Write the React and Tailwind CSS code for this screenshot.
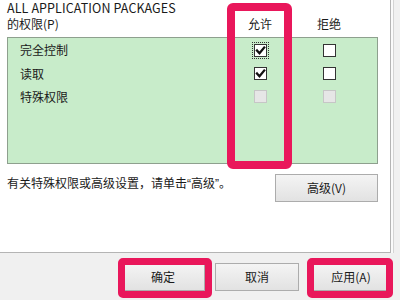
import React from "react";

function Check() {
  return (
    <svg width="11" height="11" viewBox="0 0 11 11" className="block">
      <path d="M2 5.5 L4.5 8.2 L9.2 2.5" fill="none" stroke="#111" strokeWidth="2.3" strokeLinecap="square" />
    </svg>
  );
}

function Box({ checked, disabled, focus }) {
  const box = disabled ? (
    <div className="w-[13px] h-[13px] border border-[#c6c6c6] bg-[#e6e6e6]" />
  ) : (
    <div className="w-[13px] h-[13px] border border-[#333] bg-white flex items-center justify-center">
      {checked && <Check />}
    </div>
  );
  if (focus) {
    return <div className="p-[1px] border border-dotted border-[#333]">{box}</div>;
  }
  return box;
}

function Row({ label, h, a, b, focus, disabled }) {
  return (
    <div className={`flex items-center ${h}`}>
      <div className="w-[227px] pl-[12px] leading-[16px]">{label}</div>
      <div className="w-[50px] flex justify-center">
        <Box checked={a} disabled={disabled} focus={focus} />
      </div>
      <div className="w-[50px] ml-[19px] flex justify-center">
        <Box checked={b} disabled={disabled} />
      </div>
    </div>
  );
}

function Btn({ children, className = "" }) {
  return (
    <div
      className={`h-[28px] border border-[#acacac] bg-linear-to-b from-[#f4f4f4] to-[#e2e2e2] flex items-center justify-center text-[12px] text-[#1a1a1a] ${className}`}
    >
      {children}
    </div>
  );
}

export default function App() {
  return (
    <div className="w-[400px] h-[300px] overflow-hidden relative bg-[#f0f0f0] flex flex-col text-[12px] text-[#1a1a1a] font-['Noto_Sans_CJK_SC','Liberation_Sans',sans-serif]">
      <div className="flex h-[253px] shrink-0">
        <div className="w-[391px] h-full bg-white border-r border-b border-[#b4b4b4] flex flex-col">
          <div className="flex h-[37px] pl-[7px]">
            <div className="w-[228px] leading-[16px]">
              <div className="text-[12.5px] tracking-[0.1px]">ALL APPLICATION PACKAGES</div>
              <div>的权限(P)</div>
            </div>
            <div className="w-[50px] pt-[16px] leading-[16px] text-center">允许</div>
            <div className="w-[50px] ml-[19px] pt-[16px] leading-[16px] text-center">拒绝</div>
          </div>
          <div className="ml-[7px] w-[371px] h-[127px] border border-[#8ea08e] bg-[#c8ecca]">
            <Row label="完全控制" h="h-[24px]" a={true} b={false} focus />
            <Row label="读取" h="h-[23px]" a={true} b={false} />
            <Row label="特殊权限" h="h-[23px]" disabled />
          </div>
          <div className="ml-[7px] w-[371px] mt-[10px] flex items-start">
            <div className="mt-[1px] leading-[16px]">
              有关特殊权限或高级设置，请单击<span className="font-['Liberation_Sans',sans-serif]">“</span>高级<span className="font-['Liberation_Sans',sans-serif]">”</span>。
            </div>
            <Btn className="ml-auto w-[103px]">高级(V)</Btn>
          </div>
        </div>
        <div className="w-[3px] h-full bg-[#fafafa] border-r border-[#d4d4d4]" />
        <div className="flex-1" />
      </div>
      <div className="flex pt-[10px] pl-[121px] gap-[10px]">
        <Btn className="w-[84px]">确定</Btn>
        <Btn className="w-[84px]">取消</Btn>
        <Btn className="w-[84px]">应用(A)</Btn>
      </div>

      <div className="absolute left-[227px] top-[3px] w-[65px] h-[166px] border-[8px] border-[#e9175b] rounded-[6px]" />
      <div className="absolute left-[118px] top-[258px] w-[94px] h-[40px] border-[7px] border-[#e9175b] rounded-[5px]" />
      <div className="absolute left-[307px] top-[258px] w-[86px] h-[40px] border-[7px] border-[#e9175b] rounded-[5px]" />
    </div>
  );
}
